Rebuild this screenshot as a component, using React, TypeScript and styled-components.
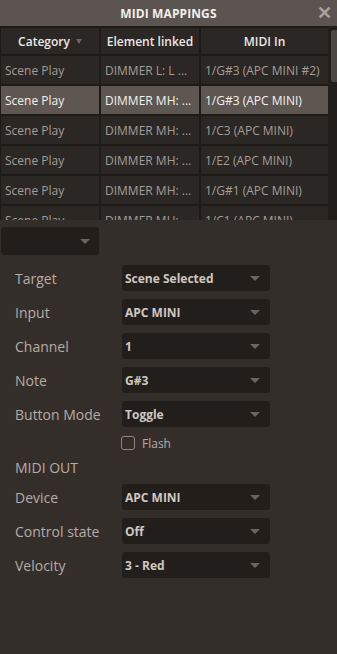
import React from "react";
import styled, { createGlobalStyle } from "styled-components";

const GlobalStyle = createGlobalStyle`
  html, body { margin: 0; padding: 0; background: #342e2b; }
  body { font-family: "Open Sans", "Liberation Sans", sans-serif; }
  * { box-sizing: border-box; }
`;

const Window = styled.div`
  width: 337px;
  height: 654px;
  display: flex;
  flex-direction: column;
  background: #342e2b;
  overflow: hidden;
`;

const TitleBar = styled.div`
  height: 26px;
  flex: none;
  background: #5b5450;
  display: grid;
  grid-template-columns: 1fr auto 1fr;
  align-items: center;
`;

const Title = styled.div`
  grid-column: 2;
  color: #f2efec;
  font-weight: 700;
  font-size: 12px;
  letter-spacing: 0.1px;
`;

const Close = styled.div`
  grid-column: 3;
  justify-self: end;
  margin-right: 5px;
  color: #a8a29e;
  font-size: 18px;
  font-weight: 700;
  line-height: 1;
  margin-top: -2px;
`;

const TableArea = styled.div`
  height: 194px;
  flex: none;
  display: flex;
  background: #1e1a18;
`;

const TableBody = styled.div`
  flex: 1;
  overflow: hidden;
  padding: 2px 0 0 1px;
  display: flex;
  flex-direction: column;
  gap: 2px;
`;

const Row = styled.div`
  display: grid;
  grid-template-columns: 98px 98px 127px;
  column-gap: 2px;
  flex: none;
`;

const HeadCell = styled.div`
  height: 26px;
  background: #2b2724;
  color: #ece8e4;
  font-size: 12px;
  font-weight: 600;
  display: flex;
  align-items: center;
  justify-content: center;
  gap: 6px;
`;

const SortArrow = styled.span`
  width: 0;
  height: 0;
  border-left: 3.5px solid transparent;
  border-right: 3.5px solid transparent;
  border-top: 5px solid #6d6560;
  margin-top: 1px;
`;

const Cell = styled.div<{ $selected?: boolean }>`
  height: 28px;
  background: ${(p) => (p.$selected ? "#5e5651" : "#2b2724")};
  color: ${(p) => (p.$selected ? "#f4f1ee" : "#a59d97")};
  font-size: 12px;
  display: flex;
  align-items: center;
  padding-left: 4px;
  white-space: nowrap;
  overflow: hidden;
`;

const Scrollbar = styled.div`
  width: 9px;
  flex: none;
  background: #221e1c;
  padding: 4px 0 0 3px;
`;

const Thumb = styled.div`
  width: 6px;
  height: 52px;
  background: #4e4844;
  border-radius: 3px 0 0 3px;
`;

const Panel = styled.div`
  flex: 1;
  display: flex;
  flex-direction: column;
`;

const FilterSelect = styled.div`
  margin: 7px 0 0 1px;
  width: 98px;
  height: 28px;
  background: #221e1c;
  border-radius: 3px;
  display: flex;
  align-items: center;
  justify-content: flex-end;
  padding-right: 9px;
`;

const Caret = styled.span`
  width: 0;
  height: 0;
  border-left: 5px solid transparent;
  border-right: 5px solid transparent;
  border-top: 5px solid #6b635e;
`;

const Form = styled.div`
  margin-top: 10px;
  padding-left: 15px;
  display: flex;
  flex-direction: column;
`;

const FieldRow = styled.div`
  display: grid;
  grid-template-columns: 107px 148px;
  align-items: center;
  height: 26px;
  margin-bottom: 8px;
`;

const Label = styled.div`
  color: #b4aca5;
  font-size: 14px;
  white-space: nowrap;
`;

const Select = styled.div`
  height: 26px;
  background: #221e1c;
  border-radius: 3px;
  display: flex;
  align-items: center;
  justify-content: space-between;
  padding: 0 10px 0 3px;
  color: #cfc8c1;
  font-size: 12px;
  font-weight: 700;
`;

const FlashRow = styled.div`
  margin: 1px 0 0 106px;
  height: 14px;
  display: flex;
  align-items: center;
  gap: 7px;
  color: #b4aca5;
  font-size: 12px;
`;

const Checkbox = styled.span`
  width: 14px;
  height: 14px;
  border: 1.5px solid #8e8682;
  border-radius: 3px;
`;

const SectionLabel = styled(Label)`
  margin-top: 8px;
  height: 20px;
  line-height: 20px;
  margin-bottom: 6px;
`;

const rows = [
  ["Scene Play", "DIMMER L: L ...", "1/G#3 (APC MINI #2)"],
  ["Scene Play", "DIMMER MH: ...", "1/G#3 (APC MINI)"],
  ["Scene Play", "DIMMER MH: ...", "1/C3 (APC MINI)"],
  ["Scene Play", "DIMMER MH: ...", "1/E2 (APC MINI)"],
  ["Scene Play", "DIMMER MH: ...", "1/G#1 (APC MINI)"],
  ["Scene Play", "DIMMER MH: ...", "1/C1 (APC MINI)"],
];

const Field = ({ label, value }: { label: string; value: string }) => (
  <FieldRow>
    <Label>{label}</Label>
    <Select>
      <span>{value}</span>
      <Caret />
    </Select>
  </FieldRow>
);

export default function App() {
  return (
    <Window>
      <GlobalStyle />
      <TitleBar>
        <Title>MIDI MAPPINGS</Title>
        <Close>✕</Close>
      </TitleBar>
      <TableArea>
        <TableBody>
          <Row>
            <HeadCell>
              Category <SortArrow />
            </HeadCell>
            <HeadCell>Element linked</HeadCell>
            <HeadCell>MIDI In</HeadCell>
          </Row>
          {rows.map((r, i) => (
            <Row key={i}>
              {r.map((c, j) => (
                <Cell key={j} $selected={i === 1}>
                  {c}
                </Cell>
              ))}
            </Row>
          ))}
        </TableBody>
        <Scrollbar>
          <Thumb />
        </Scrollbar>
      </TableArea>
      <Panel>
        <FilterSelect>
          <Caret />
        </FilterSelect>
        <Form>
          <Field label="Target" value="Scene Selected" />
          <Field label="Input" value="APC MINI" />
          <Field label="Channel" value="1" />
          <Field label="Note" value="G#3" />
          <Field label="Button Mode" value="Toggle" />
          <FlashRow>
            <Checkbox />
            Flash
          </FlashRow>
          <SectionLabel>MIDI OUT</SectionLabel>
          <Field label="Device" value="APC MINI" />
          <Field label="Control state" value="Off" />
          <Field label="Velocity" value="3 - Red" />
        </Form>
      </Panel>
    </Window>
  );
}
